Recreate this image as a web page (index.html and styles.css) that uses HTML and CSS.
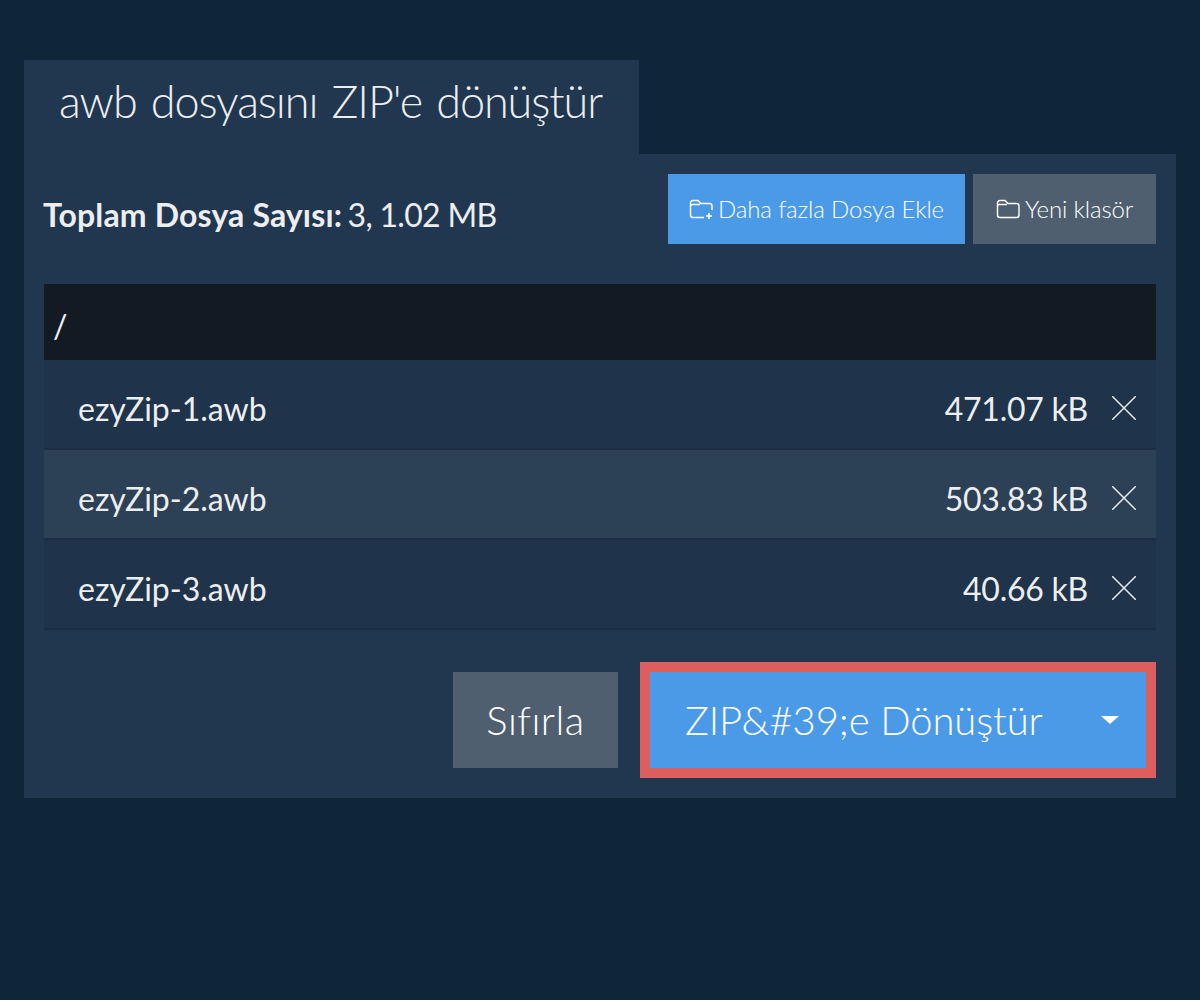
FILE: index.html
```html
<!DOCTYPE html>
<html lang="tr">
<head>
  <meta charset="UTF-8" />
  <title>awb dosyasını ZIP'e dönüştür</title>
  <link rel="stylesheet" href="styles.css">
</head>
<body>
  <div class="wrap">
    <h1 class="tab-title">awb dosyasını ZIP'e dönüştür</h1>
    <div class="panel">
      <div class="top-row">
        <div class="total"><strong>Toplam Dosya Sayısı:</strong> 3, 1.02 MB</div>
        <div class="top-btns">
          <button type="button" class="btn btn-blue">
            <svg class="folder-icon" viewBox="0 0 24 20" fill="none" stroke="#fff" stroke-width="1.4">
              <path d="M23 11V7A2.500 2.500 0 0 0 20.500 4.500H12L9 1.500H4A2.500 2.500 0 0 0 1.500 4V16A2.500 2.500 0 0 0 4 18.500H15"/>
              <path d="M1.500 7A2 2 0 0 1 3.500 5.500H11"/>
              <path d="M20 14V20M17 17H23" stroke-width="1.600"/>
            </svg>
            Daha fazla Dosya Ekle
          </button>
          <button type="button" class="btn btn-gray">
            <svg class="folder-icon" viewBox="0 0 24 20" fill="none" stroke="#fff" stroke-width="1.4">
              <path d="M23 16V7A2.500 2.500 0 0 0 20.500 4.500H12L9 1.500H4A2.500 2.500 0 0 0 1.500 4V16A2.500 2.500 0 0 0 4 18.500H20.500A2.500 2.500 0 0 0 23 16Z"/>
              <path d="M1.500 7A2 2 0 0 1 3.500 5.500H11"/>
            </svg>
            Yeni klasör
          </button>
        </div>
      </div>

      <div class="path-bar">/</div>
      <div class="file-row">
        <span class="file-name">ezyZip-1.awb</span>
        <span class="file-size">471.07 kB</span>
        <svg class="x-icon" viewBox="0 0 24 24" stroke="#e8eaec" stroke-width="1.500"><path d="M0 0L24 24M24 0L0 24"/></svg>
      </div>
      <div class="file-row file-row-hover">
        <span class="file-name">ezyZip-2.awb</span>
        <span class="file-size">503.83 kB</span>
        <svg class="x-icon" viewBox="0 0 24 24" stroke="#e8eaec" stroke-width="1.500"><path d="M0 0L24 24M24 0L0 24"/></svg>
      </div>
      <div class="file-row">
        <span class="file-name">ezyZip-3.awb</span>
        <span class="file-size">40.66 kB</span>
        <svg class="x-icon" viewBox="0 0 24 24" stroke="#e8eaec" stroke-width="1.500"><path d="M0 0L24 24M24 0L0 24"/></svg>
      </div>

      <div class="bottom-row">
        <button type="button" class="btn btn-gray btn-large btn-reset">Sıfırla</button>
        <button type="button" class="btn btn-blue btn-large btn-convert">
          <span>ZIP&amp;#39;e Dönüştür</span>
          <span class="caret"></span>
        </button>
      </div>
    </div>
  </div>
</body>
</html>
```

FILE: styles.css
```css
* {
  box-sizing: border-box;
}

body {
  margin: 0;
  background-color: #0f2539;
  font-family: "Lato", sans-serif;
  color: #eceef0;
}

.wrap {
  padding: 60px 24px 0;
}

.tab-title {
  display: inline-block;
  vertical-align: top;
  width: 615px;
  height: 94px;
  margin: 0;
  padding-left: 35px;
  background-color: #213750;
  font-size: 45px;
  font-weight: 300;
  letter-spacing: -1.1px;
  word-spacing: 3px;
  line-height: 82px;
  white-space: nowrap;
}

.panel {
  height: 644px;
  padding: 20px;
  background-color: #213750;
}

.top-row {
  display: flex;
  justify-content: space-between;
  align-items: center;
  height: 70px;
  margin-bottom: 40px;
}

.total {
  margin-left: -1px;
  padding-top: 10px;
  font-size: 32px;
  letter-spacing: -0.7px;
}

.total strong {
  margin-right: -2px;
  letter-spacing: 0.15px;
}

.top-btns {
  display: flex;
  gap: 8px;
}

.btn {
  border: none;
  color: #fff;
  font-family: inherit;
  font-weight: 300;
}

.top-btns .btn {
  display: flex;
  align-items: center;
  justify-content: center;
  gap: 5px;
  height: 70px;
  padding-bottom: 2px;
  font-size: 24px;
  letter-spacing: -0.15px;
}

.top-btns .btn-blue {
  width: 297px;
}

.top-btns .btn-gray {
  width: 183px;
}

.btn-blue {
  background-color: #4b9ae8;
}

.btn-gray {
  background-color: #4f5f70;
}

.folder-icon {
  width: 24px;
  height: 20px;
}

.path-bar {
  height: 76px;
  padding-left: 9px;
  background-color: #121a24;
  font-size: 32px;
  line-height: 84px;
}

.file-row {
  display: flex;
  align-items: center;
  height: 90px;
  padding: 8px 20px 0 34px;
  background-color: #1f344b;
  border-bottom: 2px solid #1b2e43;
  font-size: 32px;
}

.file-row-hover {
  background-color: #2c4056;
}

.file-name {
  flex: 1;
}

.file-size {
  letter-spacing: -0.25px;
}

.x-icon {
  width: 24px;
  height: 24px;
  margin-left: 24px;
}

.bottom-row {
  display: flex;
  justify-content: flex-end;
  gap: 32px;
  margin-top: 42px;
}

.btn-large {
  height: 96px;
  font-size: 40px;
}

.btn-reset {
  width: 165px;
  padding: 0;
  letter-spacing: 0.5px;
}

.btn-convert {
  display: flex;
  align-items: center;
  justify-content: space-between;
  width: 496px;
  margin-right: 10px;
  padding: 0 27px 0 35px;
  outline: 10px solid #dd5f5d;
  letter-spacing: -0.1px;
}

.caret {
  width: 0;
  height: 0;
  margin-top: -1px;
  border-left: 9px solid transparent;
  border-right: 9px solid transparent;
  border-top: 8px solid #fff;
}
```
